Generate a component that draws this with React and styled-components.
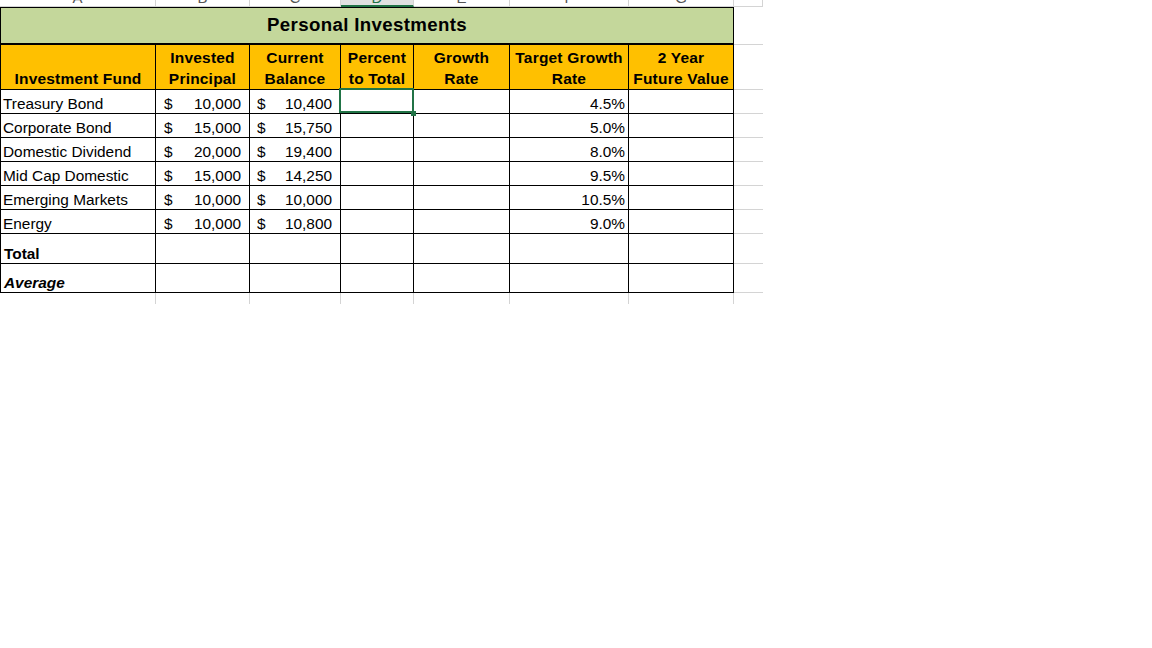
import React from 'react';
import styled, { createGlobalStyle } from 'styled-components';

const GlobalStyle = createGlobalStyle`
  body {
    margin: 0;
    background: #ffffff;
    font-family: "Liberation Sans", Arial, sans-serif;
    color: #000;
  }
`;

const COLS = '156px 94px 91px 73px 96px 119px 105px 29px';
const GRID = '#d4d4d4';
const SEL = '#217346';

const Sheet = styled.div`
  width: 763px;
  display: flex;
  flex-direction: column;
`;

const Row = styled.div`
  display: grid;
  grid-template-columns: ${COLS};
  height: ${p => p.$h}px;
`;

const ColHead = styled.div`
  box-sizing: border-box;
  overflow: hidden;
  display: flex;
  align-items: flex-end;
  justify-content: center;
  background: ${p => (p.$active ? '#e1e1e1' : '#ffffff')};
  border-right: 1px solid ${GRID};
  border-bottom: ${p => (p.$active ? `2px solid ${SEL}` : `1px solid ${GRID}`)};
  color: ${p => (p.$active ? SEL : '#555')};
  font-size: 15px;
  line-height: 15px;
  span {
    margin-bottom: ${p => (p.$active ? 0 : 1)}px;
  }
`;

const Title = styled.div`
  grid-column: 1 / 8;
  box-sizing: border-box;
  background: #c4d79b;
  border: 1px solid #000;
  border-bottom: 2px solid #000;
  display: flex;
  align-items: center;
  justify-content: center;
  padding-bottom: 2px;
  font-weight: bold;
  font-size: 18.67px;
  letter-spacing: 0.35px;
  line-height: 22px;
`;

const Head = styled.div`
  box-sizing: border-box;
  background: #ffc000;
  border-right: 1px solid #000;
  border-bottom: 1px solid #000;
  border-left: ${p => (p.$first ? '1px solid #000' : 'none')};
  display: flex;
  flex-direction: column;
  justify-content: flex-end;
  align-items: center;
  text-align: center;
  font-weight: bold;
  font-size: 15.5px;
  letter-spacing: 0.2px;
  line-height: 20.5px;
  white-space: nowrap;
`;

const Cell = styled.div`
  position: relative;
  box-sizing: border-box;
  border-right: 1px solid #000;
  border-bottom: 1px solid #000;
  border-left: ${p => (p.$first ? '1px solid #000' : 'none')};
  display: flex;
  align-items: flex-end;
  justify-content: ${p => p.$justify || 'flex-start'};
  padding: 0 ${p => p.$pr ?? 0}px 1px ${p => p.$pl ?? 2}px;
  font-size: 15.4px;
  line-height: 17px;
  font-weight: ${p => (p.$bold ? 'bold' : 'normal')};
  font-style: ${p => (p.$italic ? 'italic' : 'normal')};
  white-space: nowrap;
`;

const Spare = styled.div`
  box-sizing: border-box;
  border-bottom: 1px solid ${GRID};
`;

const Tail = styled.div`
  box-sizing: border-box;
  border-right: ${p => (p.$line ? `1px solid ${GRID}` : 'none')};
`;

const Selection = styled.div`
  position: absolute;
  left: -2px;
  top: -2px;
  width: 75px;
  height: 25px;
  box-sizing: border-box;
  border: 2px solid ${SEL};
  z-index: 2;
  pointer-events: none;
`;

const Handle = styled.div`
  position: absolute;
  left: 70px;
  top: 21px;
  width: 5px;
  height: 5px;
  background: ${SEL};
  z-index: 3;
`;

const funds = [
  { name: 'Treasury Bond', principal: '10,000', balance: '10,400', target: '4.5%' },
  { name: 'Corporate Bond', principal: '15,000', balance: '15,750', target: '5.0%' },
  { name: 'Domestic Dividend', principal: '20,000', balance: '19,400', target: '8.0%' },
  { name: 'Mid Cap Domestic', principal: '15,000', balance: '14,250', target: '9.5%' },
  { name: 'Emerging Markets', principal: '10,000', balance: '10,000', target: '10.5%' },
  { name: 'Energy', principal: '10,000', balance: '10,800', target: '9.0%' },
];

const letters = ['A', 'B', 'C', 'D', 'E', 'F', 'G', ''];

const Money = ({ value, pl }) => (
  <Cell $justify="space-between" $pl={pl} $pr={8}>
    <span>$</span>
    <span>{value}</span>
  </Cell>
);

const Blank = ({ children }) => <Cell>{children}</Cell>;

export default function App() {
  return (
    <>
      <GlobalStyle />
      <Sheet>
        <Row $h={7}>
          {letters.map((l, i) => (
            <ColHead key={i} $active={l === 'D'}>
              <span>{l}</span>
            </ColHead>
          ))}
        </Row>

        <Row $h={38}>
          <Title>Personal Investments</Title>
          <Spare />
        </Row>

        <Row $h={45}>
          <Head $first>Investment Fund</Head>
          <Head>Invested<br />Principal</Head>
          <Head>Current<br />Balance</Head>
          <Head>Percent<br />to Total</Head>
          <Head>Growth<br />Rate</Head>
          <Head>Target Growth<br />Rate</Head>
          <Head>2 Year<br />Future Value</Head>
          <Spare />
        </Row>

        {funds.map((f, i) => (
          <Row $h={24} key={f.name}>
            <Cell $first>{f.name}</Cell>
            <Money value={f.principal} pl={8} />
            <Money value={f.balance} pl={7} />
            <Blank>
              {i === 0 && (
                <>
                  <Selection />
                  <Handle />
                </>
              )}
            </Blank>
            <Blank />
            <Cell $justify="flex-end" $pr={3}>{f.target}</Cell>
            <Blank />
            <Spare />
          </Row>
        ))}

        <Row $h={30}>
          <Cell $first $bold $pl={3}>Total</Cell>
          <Blank />
          <Blank />
          <Blank />
          <Blank />
          <Blank />
          <Blank />
          <Spare />
        </Row>

        <Row $h={29}>
          <Cell $first $bold $italic $pl={3}>Average</Cell>
          <Blank />
          <Blank />
          <Blank />
          <Blank />
          <Blank />
          <Blank />
          <Spare />
        </Row>

        <Row $h={11}>
          {letters.map((l, i) => (
            <Tail key={i} $line={i < 7} />
          ))}
        </Row>
      </Sheet>
    </>
  );
}
